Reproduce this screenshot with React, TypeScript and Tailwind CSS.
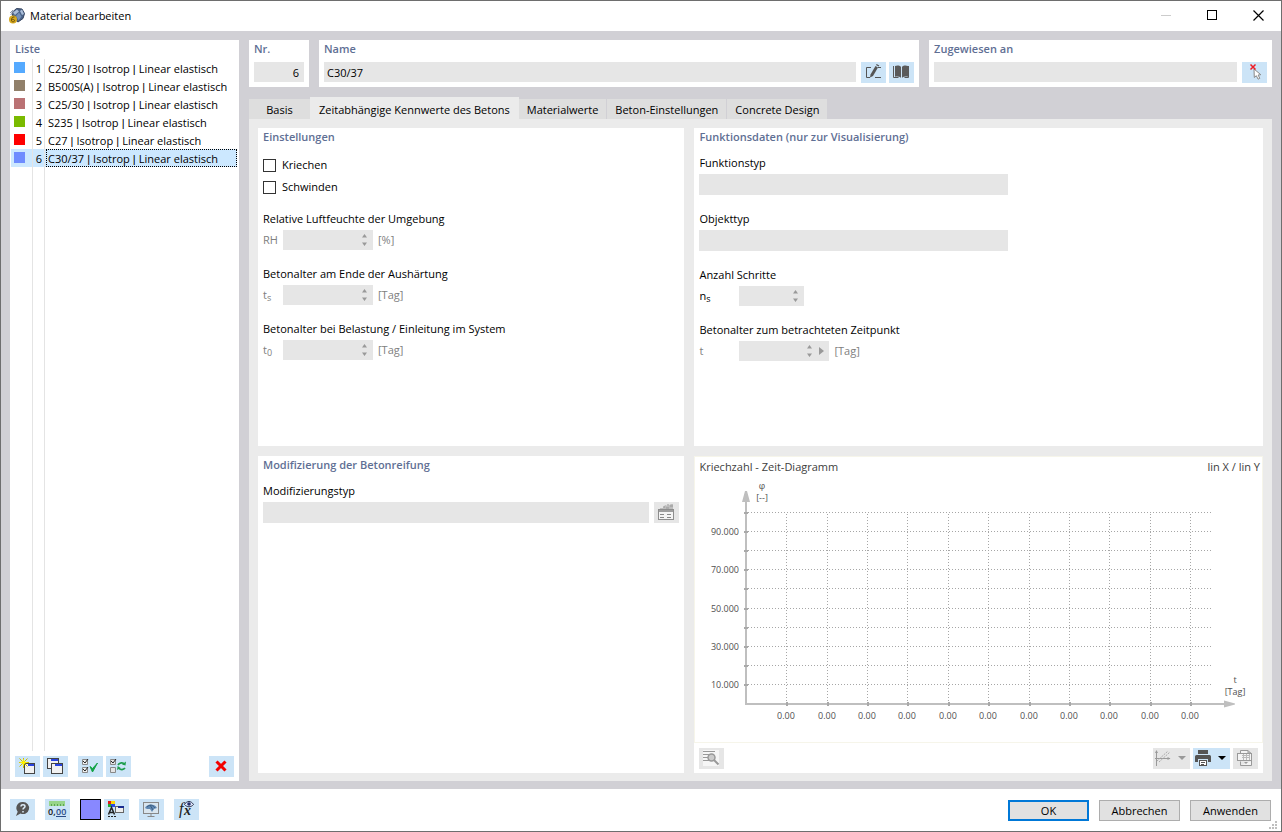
import { useState } from 'react';
import type { ReactNode } from 'react';
import clsx from 'clsx';

interface Material {
  id: number;
  parts: string[];
  color: string;
}

const materials: Material[] = [
  { id: 1, parts: ['C25/30', 'Isotrop', 'Linear elastisch'], color: 'bg-[#55aaff]' },
  { id: 2, parts: ['B500S(A)', 'Isotrop', 'Linear elastisch'], color: 'bg-[#91806a]' },
  { id: 3, parts: ['C25/30', 'Isotrop', 'Linear elastisch'], color: 'bg-[#ba7274]' },
  { id: 4, parts: ['S235', 'Isotrop', 'Linear elastisch'], color: 'bg-[#7aba00]' },
  { id: 5, parts: ['C27', 'Isotrop', 'Linear elastisch'], color: 'bg-[#ff0000]' },
  { id: 6, parts: ['C30/37', 'Isotrop', 'Linear elastisch'], color: 'bg-[#6e8cff]' },
];

const tabs = [
  'Basis',
  'Zeitabhängige Kennwerte des Betons',
  'Materialwerte',
  'Beton-Einstellungen',
  'Concrete Design',
];

// Horizontal and vertical grid positions of the diagram
const gridRows = [33, 52, 71, 90, 109, 129, 148, 167, 186, 205];
const gridCols = [91, 132, 172, 212, 253, 293, 334, 374, 414, 455, 495];
const yLabels = [
  { y: 52, text: '90.000' },
  { y: 90, text: '70.000' },
  { y: 129, text: '50.000' },
  { y: 167, text: '30.000' },
  { y: 205, text: '10.000' },
];

/* ---------- Icons ---------- */

const Icon = ({ children }: { children: ReactNode }) => (
  <svg width="25" height="21" viewBox="0 0 25 21" fill="none" aria-hidden="true">
    {children}
  </svg>
);

const AppIcon = () => (
  <svg width="16" height="16" viewBox="0 0 16 16" aria-hidden="true">
    <path d="M3 4.500 7.500.500 13 1l2.500 4.500L14 10.500 9 14 4 10z" fill="#4c6489" stroke="#34435f" />
    <path d="M4 4.500 8 1.500l2 2-4 3.500zM11 3l2-1.500 2 4.500-2 1z" fill="#a9bdd9" />
    <path d="m7 8 3-3.500 2.500 4-3 4z" fill="#7590b8" />
    <path d="m1 5 3-3M1.500 7l4-4" stroke="#8999b3" />
    <circle cx="4" cy="11.500" r="4" fill="#d6a91f" />
    <path d="M5.500 9C3 8.500 2.500 10.500 2.500 12.500c0 1.700 3 1.700 3 .2 0-1.500-2-1.700-3-.4" fill="none" stroke="#6f5208" />
  </svg>
);

const EditIcon = () => (
  <Icon>
    <path d="M10 5.500H5.500v10H9M17 5.500h3M14 15.500h6" stroke="#555" />
    <path d="m9.500 12.500 5-8.500 2.500 1.500-5 8.500-3 1.500z" fill="#555" />
    <path d="m15 3 .7-1 2.600 1.500-.7 1z" fill="#555" />
  </Icon>
);

const BookIcon = () => (
  <Icon>
    <path d="M6 4c2.500-1 4.500-.5 6 .8v11c-1.500-1.200-3.500-1.600-6-1zM19 4c-2.500-1-4.500-.5-6 .8v11c1.500-1.200 3.500-1.600 6-1z" fill="#5a5a5a" />
    <path d="M4.500 4v11.500h5M19.500 4v11.500h-4" stroke="#5a5a5a" />
  </Icon>
);

const DeselectIcon = () => (
  <Icon>
    <path d="m12 7 .3 8.500 2-1.800 1.800 3.500 1.700-.9-1.700-3.300 2.700-.3z" fill="#fff" stroke="#8a8a8a" />
    <path d="m8.500 2.500 5 5M13.500 2.500l-5 5" stroke="#ee1c25" strokeWidth="1.500" />
  </Icon>
);

const NewIcon = () => (
  <Icon>
    <rect x="9.500" y="7.500" width="10" height="10" fill="#f1f1f1" stroke="#444" />
    <path d="M13 8h6v2h-6z" fill="#2944e0" />
    <path d="M8.500 2v10M4 6.500h10M4.500 2.500l8 8M12.500 2.500l-8 8" stroke="#c9bd00" />
    <path d="m8.500 2.500 1 3 3.500 1-3.500 1-1 3-1-3-3.500-1 3.500-1z" fill="#fff200" />
  </Icon>
);

const CopyIcon = () => (
  <Icon>
    <rect x="4.500" y="2.500" width="11" height="10" fill="#f1f1f1" stroke="#444" />
    <path d="M8 3h7v2H8z" fill="#2944e0" />
    <rect x="8.500" y="7.500" width="11" height="10" fill="#f1f1f1" stroke="#444" />
    <path d="M12 8h7v2h-7z" fill="#2944e0" />
  </Icon>
);

const CheckAllIcon = () => (
  <Icon>
    <path d="M4.500 3.500h5v5h-5zM4.500 11.500h5v5h-5z" fill="#eee" stroke="#888" />
    <path d="m5 5 2 2 3-4M5 13l2 2 3-4" stroke="#222" />
    <path d="m12 10.500 2.500 5.500 5-9-5 5.500z" fill="#12a345" stroke="#12a345" />
  </Icon>
);

const ToggleIcon = () => (
  <Icon>
    <path d="M4.500 3.500h5v5h-5zM4.500 11.500h5v5h-5z" fill="#e4e4e4" stroke="#888" />
    <path d="m5 5 2 2 3-4" stroke="#222" />
    <path d="M12 9c1.500-2.500 5-3 6.500-.8M19 12c-1.500 2-4.500 2-6 .3" stroke="#1d9d4c" strokeWidth="1.700" />
    <path d="m20 5.500-.5 4-3.500-1zM11 14l.7-4 3 2z" fill="#1d9d4c" />
  </Icon>
);

const DeleteIcon = () => (
  <Icon>
    <path d="m7.500 5.500 9 9M16.500 5.500l-9 9" stroke="#f30000" strokeWidth="3" />
  </Icon>
);

const HelpIcon = () => (
  <Icon>
    <path d="M13 3a6 6 0 1 1-2.500 11.400L6 17l1.700-4.300A6 6 0 0 1 13 3z" fill="#555" />
    <path d="M11 7.500c0-2.300 4-2.300 4 0 0 1.500-2 1.300-2 3M13 12v1.500" stroke="#dcebf7" strokeWidth="1.500" />
  </Icon>
);

const DecimalsIcon = () => (
  <Icon>
    <path d="M4 2h16v5H4z" fill="#97d58b" />
    <path d="M6.500 5v2M9.500 5v2M12.500 5v2M15.500 5v2M18.500 5v2" stroke="#5ca552" />
    <text x="3" y="16" className="fill-[#111] text-[9px] font-semibold">0,</text>
    <text x="11" y="16" className="fill-[#2a4a86] text-[9px] font-semibold">00</text>
    <path d="M11 17.500h10" stroke="#2a4a86" />
  </Icon>
);

const DisplayIcon = () => (
  <Icon>
    <path d="M4 2h3v3H4z" fill="#e01818" />
    <path d="M7 2h4v3H7z" fill="#ffd600" />
    <path d="M4 5h3v3H4z" fill="#1faa35" />
    <path d="M7 5h4v3H7z" fill="#2b48e8" />
    <path d="M4.500 15.500 7.500 8.500l3 7M6 13.500h3.500" stroke="#222" strokeWidth="1.500" />
    <path d="M4 17.500h2M7 17.500h2M10 17.500h2" stroke="#222" />
    <rect x="11.500" y="7.500" width="8" height="6" fill="#eee" stroke="#666" />
    <path d="M14 7h6v2h-6z" fill="#1a2d90" />
  </Icon>
);

const MonitorIcon = () => (
  <Icon>
    <rect x="4.500" y="3.500" width="15" height="11" fill="#d9e5ee" stroke="#888" />
    <path d="M6 9c1.500-4 9-5 12 0l-3 1-2 3-2-3-3 0z" fill="#6289b3" />
    <path d="M8 8c3-3 6-2 8 1M11 6l3 5" stroke="#3c6084" />
    <path d="M12 15v2M8.500 17.500h7" stroke="#888" />
  </Icon>
);

const FormulaIcon = () => (
  <Icon>
    <text x="5" y="15" className="fill-[#222] font-['Liberation_Serif',serif] text-[16px] italic">f</text>
    <text x="10" y="16" className="fill-[#222] font-['Liberation_Serif',serif] text-[14px] font-bold italic">x</text>
    <path d="M10.500 5.500c2.500-4 6.500-4 9 0-2.500 3-6.500 3-9 0z" fill="#dfe7fa" stroke="#26304f" />
    <circle cx="15" cy="5" r="1.800" fill="#26306f" />
  </Icon>
);

const CatalogIcon = () => (
  <Icon>
    <path d="M6 6h3l2-3 3 1 3-2h2v5H6z" fill="#bdbdbd" />
    <path d="M9 5h2M13 3h2M12 6h3M16 4h3" stroke="#979797" />
    <rect x="4.500" y="7.500" width="15" height="10" fill="#f4f4f4" stroke="#8d8d8d" />
    <path d="M5 8h14v2H5z" fill="#9e9e9e" />
    <path d="M6 12.500h4M13 12.500h4M6 15.500h4M13 15.500h4" stroke="#888" />
  </Icon>
);

const PreviewIcon = () => (
  <Icon>
    <path d="M4 2h16v16H4z" fill="#f6f6f6" />
    <path d="M4 3.500h12M4 6.500h6M4 9.500h5M4 12.500h6" stroke="#999" />
    <circle cx="12.500" cy="9.500" r="3.500" fill="#ccc" stroke="#999" strokeWidth="1.500" />
    <path d="m15 12 4.500 4.500" stroke="#999" strokeWidth="2" />
  </Icon>
);

const AxesIcon = () => (
  <Icon>
    <path d="M3.500 3v15M2 10.500h15" stroke="#999" />
    <path d="M4 13 15 3M6 14 17 4" stroke="#aaa" strokeDasharray="2 1" />
    <path d="m2 5 1.500-3L5 5zM14.500 9l3 1.500-3 1.500z" fill="#999" />
  </Icon>
);

const PrintIcon = () => (
  <Icon>
    <path d="M5 2h10v4H5zM2 8.500Q2 7 3.500 7h13Q18 7 18 8.500V14h-3v-3H5v3H2z" fill="#555" />
    <rect x="6.500" y="12.500" width="7" height="5" fill="#fff" stroke="#555" />
    <path d="M8 14.500h4M8 16.500h3" stroke="#555" />
  </Icon>
);

const ReportIcon = () => (
  <Icon>
    <path d="M7.500 17.500v-4M18.500 13v4.500h-11M7.500 5V2.500H15L18.500 6" fill="#f4f4f4" stroke="#999" />
    <path d="M15 2.500V5h3" stroke="#999" />
    <rect x="4.500" y="5.500" width="14" height="7" fill="#f4f4f4" stroke="#999" />
    <path d="M9 7.500h8M9 9.500h8M10.500 6v6M13.500 6v6M16.500 6v6" stroke="#bbb" />
    <path d="m11 14 2 2 2-2z" fill="#999" />
  </Icon>
);

/* ---------- Controls ---------- */

interface ToolButtonProps {
  title: string;
  children: ReactNode;
  disabled?: boolean;
  menu?: boolean;
}

const ToolButton = ({ title, children, disabled, menu }: ToolButtonProps) => (
  <button
    type="button"
    aria-label={title}
    disabled={disabled}
    className={clsx(
      'flex h-[21px] shrink-0 items-center overflow-hidden',
      menu ? 'w-[37px]' : 'w-[25px]',
      disabled ? 'bg-[#e6e6e6]' : 'bg-[#cce4f7]'
    )}
  >
    {children}
    {menu && (
      <svg width="8" height="4" viewBox="0 0 8 4" className="shrink-0" aria-hidden="true">
        <path d="M0 0h8L4 4z" fill={disabled ? '#999' : '#000'} />
      </svg>
    )}
  </button>
);

const SectionTitle = ({ children }: { children: ReactNode }) => (
  <h2 className="h-[19px] leading-[17px] font-semibold text-[#5f6f94]">{children}</h2>
);

const MaterialLabel = ({ parts }: { parts: string[] }) => (
  <>
    {parts.map((part, index) => (
      <span key={index}>
        {index > 0 && <span className="font-['Liberation_Sans',sans-serif]"> | </span>}
        {part}
      </span>
    ))}
  </>
);

interface SpinFieldProps {
  id: string;
  label: string;
  symbol: ReactNode;
  unit?: string;
  wide?: boolean;
  small?: boolean;
  active?: boolean;
  more?: boolean;
}

const SpinField = ({ id, label, symbol, unit, wide, small, active, more }: SpinFieldProps) => (
  <div>
    <label htmlFor={id} className="block h-5">{label}</label>
    <div className="flex h-5 items-center text-[#808080]">
      <span className={clsx(wide ? 'w-10' : 'w-5', active && 'text-black')}>{symbol}</span>
      <div className={clsx('flex h-5 items-center bg-[#e6e6e6] pr-[5px]', small ? 'w-[65px]' : 'w-[90px]')}>
        <input id={id} type="text" disabled className="h-5 min-w-0 flex-1 px-1 text-right" />
        <svg width="7" height="12" viewBox="0 0 7 12" fill="#999" aria-hidden="true">
          <path d="M1 3.500 3.500 0 6 3.500zM1 8.500 3.500 12 6 8.500z" />
        </svg>
        {more && (
          <svg width="13" height="8" viewBox="0 0 13 8" className="-mr-0.5" fill="#999" aria-hidden="true">
            <path d="m6 0 5 4-5 4z" />
          </svg>
        )}
      </div>
      {unit && <span className="ml-[5px]">{unit}</span>}
    </div>
  </div>
);

const SelectField = ({ id, label, className }: { id: string; label: string; className: string }) => (
  <div className={className}>
    <label htmlFor={id} className="block h-5">{label}</label>
    <select id={id} disabled className="block h-[21px] w-full appearance-none bg-[#e6e6e6]">
      <option></option>
    </select>
  </div>
);

const Check = ({ id, label }: { id: string; label: string }) => (
  <div className="flex h-[22px] items-center gap-1.5">
    <input id={id} type="checkbox" className="size-[13px] appearance-none border border-[#333] bg-white checked:bg-[#333]" />
    <label htmlFor={id}>{label}</label>
  </div>
);

const Diagram = () => (
  <svg className="min-h-[250px] w-full flex-1 text-[9px]" fill="#505050" role="img" aria-label="Kriechzahl - Zeit-Diagramm">
    <g stroke="#a6a6a6" strokeDasharray="1 2" shapeRendering="crispEdges">
      {gridRows.map((y) => (
        <line key={y} x1="53" x2="518" y1={y + 0.5} y2={y + 0.5} />
      ))}
      {gridCols.map((x) => (
        <line key={x} x1={x + 0.5} x2={x + 0.5} y1="35" y2="224" />
      ))}
    </g>
    <g fill="#bfbfbf" shapeRendering="crispEdges">
      <rect x="50" y="20" width="2" height="206" />
      <rect x="50" y="224" width="480" height="2" />
      {gridRows.map((y) => (
        <rect key={y} x="49" y={y} width="4" height="2" fill="#a9a9a9" />
      ))}
      {gridCols.map((x) => (
        <rect key={x} x={x} y="223" width="2" height="4" fill="#a9a9a9" />
      ))}
    </g>
    <path d="M47 23 50 12h2l3 11zM529 221.500l11 3v1l-11 3z" fill="#bfbfbf" />
    {yLabels.map((item) => (
      <text key={item.text} x="44" y={item.y + 4} textAnchor="end">{item.text}</text>
    ))}
    {gridCols.map((x) => (
      <text key={x} x={x} y="240" textAnchor="middle">0.00</text>
    ))}
    <text x="67" y="10" textAnchor="middle">φ</text>
    <text x="67" y="22" textAnchor="middle">[--]</text>
    <text x="540" y="204" textAnchor="middle">t</text>
    <text x="540" y="216" textAnchor="middle">[Tag]</text>
  </svg>
);

const App = () => {
  const [selected, setSelected] = useState(6);
  const [activeTab, setActiveTab] = useState(1);

  return (
    <div className="flex min-h-screen flex-col border border-[#6e6e6e] bg-white font-['Open_Sans','Noto_Sans',sans-serif] text-[11px] leading-[18px] text-black">
      {/* Title bar */}
      <header className="flex h-[30px] shrink-0 items-center pl-2">
        <AppIcon />
        <h1 className="ml-[5px] flex-1">Material bearbeiten</h1>
        <button type="button" aria-label="Minimieren" className="flex h-7 w-[46px] items-center justify-center self-start">
          <svg width="11" height="11" viewBox="0 0 11 11"><path d="M0 5.500h10" stroke="#ccc" /></svg>
        </button>
        <button type="button" aria-label="Maximieren" className="flex h-7 w-[46px] items-center justify-center self-start">
          <svg width="11" height="11" viewBox="0 0 11 11"><rect x=".5" y=".5" width="9" height="9" fill="none" stroke="#000" /></svg>
        </button>
        <button type="button" aria-label="Schließen" className="flex h-7 w-[46px] items-center justify-center self-start">
          <svg width="11" height="11" viewBox="0 0 11 11"><path d="m.5.5 10 10M10.500.5l-10 10" stroke="#000" strokeWidth="1.200" /></svg>
        </button>
      </header>

      <main className="flex flex-1 gap-2.5 bg-[#d1d0d5] px-[9px] pt-[9px] pb-2">
        {/* Material list */}
        <aside className="flex w-[229px] shrink-0 flex-col bg-white pb-1">
          <div className="pl-[5px]">
            <SectionTitle>Liste</SectionTitle>
          </div>
          <ul className="pr-0.5 pl-px">
            {materials.map((material) => (
              <li key={material.id}>
                <button
                  type="button"
                  onClick={() => setSelected(material.id)}
                  className={clsx('flex h-[18px] w-full items-stretch text-left', selected === material.id && 'bg-[#cce8ff]')}
                >
                  <span className="flex w-[22px] items-center border-r border-[#e4e4e4] pl-[3px]">
                    <span className={clsx('mb-px size-[11px]', material.color)}></span>
                  </span>
                  <span className="w-3 border-r border-[#e4e4e4] pt-px pr-0.5 text-right">{material.id}</span>
                  <span
                    className={clsx(
                      'ml-px flex-1 border border-dotted pl-px leading-[18px] whitespace-nowrap',
                      selected === material.id ? 'border-black' : 'border-transparent'
                    )}
                  >
                    <MaterialLabel parts={material.parts} />
                  </span>
                </button>
              </li>
            ))}
          </ul>
          <div className="mb-[5px] flex flex-1 pl-px">
            <div className="w-[22px] border-r border-[#e4e4e4]"></div>
            <div className="w-3 border-r border-[#e4e4e4]"></div>
          </div>
          <div className="flex items-center gap-[3px] px-[5px]">
            <ToolButton title="Neu"><NewIcon /></ToolButton>
            <ToolButton title="Kopieren"><CopyIcon /></ToolButton>
            <div className="w-1"></div>
            <ToolButton title="Alle auswählen"><CheckAllIcon /></ToolButton>
            <ToolButton title="Auswahl umkehren"><ToggleIcon /></ToolButton>
            <div className="flex-1"></div>
            <ToolButton title="Löschen"><DeleteIcon /></ToolButton>
          </div>
        </aside>

        <div className="flex min-w-0 flex-1 flex-col">
          {/* Number, name and assignment */}
          <div className="grid grid-cols-[60px_7fr_4fr] gap-2.5">
            <section className="bg-white px-[5px] pb-1">
              <SectionTitle><label htmlFor="nr">Nr.</label></SectionTitle>
              <input id="nr" readOnly defaultValue="6" className="mt-[3px] block h-5 w-full bg-[#e6e6e6] px-[5px] text-right" />
            </section>
            <section className="bg-white px-[5px] pb-1">
              <SectionTitle><label htmlFor="name">Name</label></SectionTitle>
              <div className="mt-[3px] flex gap-[3px]">
                <input id="name" readOnly defaultValue="C30/37" className="mr-0.5 h-5 min-w-0 flex-1 bg-[#e6e6e6] px-[3px]" />
                <ToolButton title="Bearbeiten"><EditIcon /></ToolButton>
                <ToolButton title="Bibliothek"><BookIcon /></ToolButton>
              </div>
            </section>
            <section className="bg-white px-[5px] pb-1">
              <SectionTitle><label htmlFor="assigned">Zugewiesen an</label></SectionTitle>
              <div className="mt-[3px] flex gap-[5px]">
                <input id="assigned" readOnly className="h-5 min-w-0 flex-1 bg-[#e6e6e6] px-[3px]" />
                <ToolButton title="Auswählen"><DeselectIcon /></ToolButton>
              </div>
            </section>
          </div>

          {/* Tabs */}
          <div role="tablist" className="mt-2.5 flex h-[22px] items-end">
            {tabs.map((tab, index) => (
              <button
                key={tab}
                type="button"
                role="tab"
                aria-selected={activeTab === index}
                onClick={() => setActiveTab(index)}
                className={clsx(
                  'min-w-[61px]',
                  activeTab === index ? 'h-[22px] bg-[#ebebeb] px-[9px] pt-1' : 'h-5 bg-[#dedede] px-2 pt-0.5',
                  index > 2 && 'border-l border-[#d1d0d5]'
                )}
              >
                {tab}
              </button>
            ))}
          </div>

          <div className="grid flex-1 grid-cols-[3fr_4fr] grid-rows-2 gap-2.5 bg-[#ebebeb] px-[9px] pt-[9px] pb-2">
            <section className="bg-white px-[5px]">
              <SectionTitle>Einstellungen</SectionTitle>
              <div className="mt-[7px] mb-3">
                <Check id="creep" label="Kriechen" />
                <Check id="shrinkage" label="Schwinden" />
              </div>
              <div className="flex flex-col gap-[15px]">
                <SpinField id="rh" label="Relative Luftfeuchte der Umgebung" symbol="RH" unit="[%]" />
                <SpinField id="ts" label="Betonalter am Ende der Aushärtung" symbol={<>t<sub className="text-[9px]">s</sub></>} unit="[Tag]" />
                <SpinField id="t0" label="Betonalter bei Belastung / Einleitung im System" symbol={<>t<sub className="text-[9px]">0</sub></>} unit="[Tag]" />
              </div>
            </section>

            <section className="bg-white px-[5px]">
              <SectionTitle>Funktionsdaten (nur zur Visualisierung)</SectionTitle>
              <div className="mt-[7px] flex flex-col gap-[15px]">
                <SelectField id="function-type" label="Funktionstyp" className="w-[309px] max-w-full" />
                <SelectField id="object-type" label="Objekttyp" className="w-[309px] max-w-full" />
                <SpinField id="steps" label="Anzahl Schritte" symbol={<>n<sub className="text-[9px]">s</sub></>} wide small active />
                <SpinField id="time" label="Betonalter zum betrachteten Zeitpunkt" symbol="t" unit="[Tag]" wide more />
              </div>
            </section>

            <section className="bg-white px-[5px]">
              <SectionTitle>Modifizierung der Betonreifung</SectionTitle>
              <div className="mt-[7px] flex items-end gap-[5px]">
                <SelectField id="modification" label="Modifizierungstyp" className="flex-1" />
                <ToolButton title="Katalog" disabled><CatalogIcon /></ToolButton>
              </div>
            </section>

            <section className="flex flex-col bg-white">
              <div className="flex flex-1 flex-col border border-[#f6f5ea]">
                <div className="flex h-[22px] items-center justify-between pr-0.5 pb-0.5 pl-1 text-[#404040]">
                  <span>Kriechzahl - Zeit-Diagramm</span>
                  <span>lin X / lin Y</span>
                </div>
                <Diagram />
              </div>
              <div className="flex h-[30px] items-center gap-[3px] px-[5px]">
                <ToolButton title="Vorschau" disabled><PreviewIcon /></ToolButton>
                <div className="flex-1"></div>
                <ToolButton title="Achsen" disabled menu><AxesIcon /></ToolButton>
                <ToolButton title="Drucken" menu><PrintIcon /></ToolButton>
                <ToolButton title="Ausdruckprotokoll" disabled><ReportIcon /></ToolButton>
              </div>
            </section>
          </div>
        </div>
      </main>

      {/* Footer */}
      <footer className="relative flex h-[42px] shrink-0 items-center gap-2.5 pr-2.5 pb-px pl-[9px]">
        <ToolButton title="Hilfe"><HelpIcon /></ToolButton>
        <ToolButton title="Einheiten"><DecimalsIcon /></ToolButton>
        <div className="flex gap-[3px]">
          <button type="button" aria-label="Farbe" className="size-[21px] border border-black bg-[#8888ff]"></button>
          <ToolButton title="Anzeige"><DisplayIcon /></ToolButton>
        </div>
        <ToolButton title="Grafik"><MonitorIcon /></ToolButton>
        <ToolButton title="Formel"><FormulaIcon /></ToolButton>
        <div className="flex-1"></div>
        <div className="flex gap-2.5 pt-0.5">
          <button type="button" className="h-[21px] w-[81px] border-2 border-[#0078d7] bg-[#e1e1e1] leading-[17px]">OK</button>
          <button type="button" className="h-[21px] w-[81px] border border-[#adadad] bg-[#e1e1e1]">Abbrechen</button>
          <button type="button" className="h-[21px] w-[81px] border border-[#adadad] bg-[#e1e1e1]">Anwenden</button>
        </div>
        <svg width="8" height="8" viewBox="0 0 8 8" fill="#bfbfbf" className="absolute right-1 bottom-0.5" aria-hidden="true">
          <path d="M6 0h2v2H6zM6 3h2v2H6zM6 6h2v2H6zM3 3h2v2H3zM3 6h2v2H3zM0 6h2v2H0z" />
        </svg>
      </footer>
    </div>
  );
};

export default App;
